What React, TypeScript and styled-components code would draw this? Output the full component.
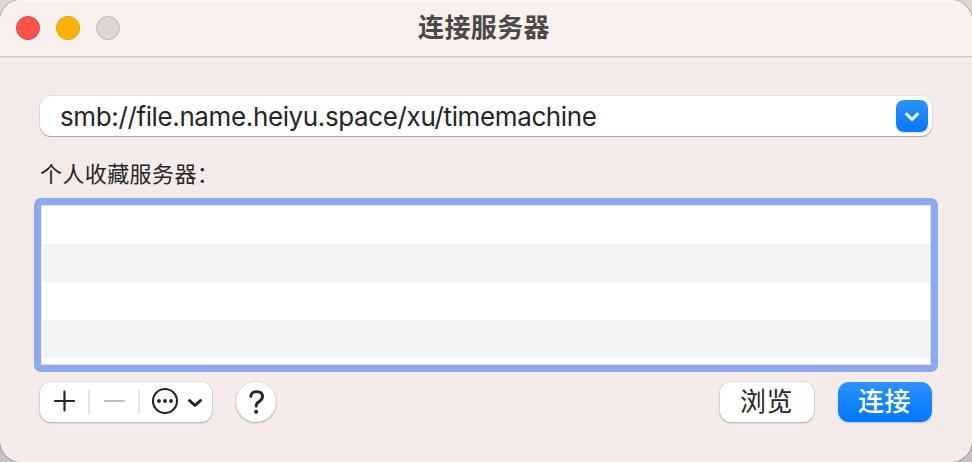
import React from "react";
import styled, { createGlobalStyle } from "styled-components";

const GlobalStyle = createGlobalStyle`
  * { box-sizing: border-box; }
  html, body { margin: 0; padding: 0; overflow: hidden; }
  body {
    background: linear-gradient(#dcd8d5, #c4c2c2);
    font-family: Inter, "Noto Sans CJK SC", sans-serif;
    color: #262626;
  }
  button { font: inherit; color: inherit; border: 0; padding: 0; background: none; }
`;

const Window = styled.main`
  display: flex;
  flex-direction: column;
  width: 972px;
  height: 462px;
  border-radius: 21px;
  background: #f4ebea;
  box-shadow: 0 0 0 1px rgba(0, 0, 0, 0.2);
  overflow: hidden;
`;

const TitleBar = styled.header`
  display: grid;
  grid-template-columns: 1fr auto 1fr;
  align-items: center;
  height: 57px;
  padding: 0 16px 1px;
  background: #faf0ee;
  border-bottom: 1px solid #d0c6c4;
  box-shadow: inset 0 1px #fffaf8, 0 1px #eae0df;
`;

const TrafficLights = styled.div`
  display: flex;
  gap: 16px;
`;

const Light = styled.span<{ $fill: string; $edge: string }>`
  width: 24px;
  height: 24px;
  border-radius: 50%;
  background: ${(p) => p.$fill};
  border: 1px solid ${(p) => p.$edge};
`;

const Title = styled.h1`
  margin: 0;
  font-family: "Noto Sans CJK SC", sans-serif;
  font-size: 26px;
  line-height: 40px;
  font-weight: 700;
  letter-spacing: 0.4px;
  color: #4b4847;
  transform: translate(-2px, -2px);
`;

const Content = styled.section`
  display: flex;
  flex-direction: column;
  padding: 39px 40px 0;
`;

const AddressField = styled.div`
  display: flex;
  align-items: center;
  justify-content: space-between;
  height: 40px;
  padding: 0 4px 0 20px;
  border-radius: 11px;
  background: #fff;
  box-shadow: 0 0 0 1px rgba(0, 0, 0, 0.06), 0 1px 1px rgba(0, 0, 0, 0.27);
`;

const Address = styled.span`
  font-size: 26px;
  line-height: 40px;
  letter-spacing: -0.375px;
  white-space: nowrap;
  padding-top: 2px;
`;

const HistoryButton = styled.button`
  display: flex;
  width: 32px;
  height: 32px;
  border-radius: 8px;
  background: linear-gradient(#2c91ff, #0579ff);
  box-shadow: 0 1px 2px rgba(0, 100, 255, 0.25);
`;

const Label = styled.div`
  height: 32px;
  margin-top: 22px;
  font-family: "Noto Sans CJK SC", sans-serif;
  font-size: 22px;
  line-height: 28px;
  letter-spacing: 0.4px;
`;

const FavoriteList = styled.div`
  height: 174px;
  margin: 8px -6px 0;
  border: 7px solid #8fa9ef;
  border-radius: 7px;
  background: #fff;
`;

const Rows = styled.div`
  height: 160px;
  border: 1px solid #dedede;
  border-left-color: #ececec;
  overflow: hidden;
`;

const Row = styled.div<{ $shaded?: boolean }>`
  height: 38px;
  background: ${(p) => (p.$shaded ? "#f3f5f4" : "#fff")};
`;

const Footer = styled.footer`
  display: flex;
  height: 40px;
  margin-top: 10px;
`;

const raised = "0 0 0 1px rgba(0,0,0,0.05), 0 1px 2px rgba(0,0,0,0.25)";

const ActionGroup = styled.div`
  display: flex;
  align-items: center;
  width: 172px;
  height: 40px;
  border-radius: 11px;
  background: #fff;
  box-shadow: ${raised};
`;

const ActionButton = styled.button<{ $width: number }>`
  display: flex;
  width: ${(p) => p.$width}px;
  height: 40px;
`;

const Divider = styled.span`
  width: 2px;
  height: 24px;
  background: #e4e4e4;
`;

const HelpButton = styled.button`
  display: flex;
  width: 40px;
  height: 40px;
  margin-left: 24px;
  border-radius: 50%;
  background: #fff;
  box-shadow: ${raised};
`;

const Choices = styled.div`
  display: flex;
  gap: 24px;
  margin-left: auto;
`;

const PushButton = styled.button<{ $primary?: boolean }>`
  width: 94px;
  height: 40px;
  padding: 0 1px 4px 0;
  border-radius: 11px;
  font-family: "Noto Sans CJK SC", sans-serif;
  font-size: 26px;
  line-height: 34px;
  letter-spacing: 0.4px;
  font-weight: ${(p) => (p.$primary ? 500 : 400)};
  color: ${(p) => (p.$primary ? "#fff" : "#262626")};
  background: ${(p) => (p.$primary ? "linear-gradient(#2c91ff, #0077ff)" : "#fff")};
  box-shadow: ${(p) => (p.$primary ? "0 1px 2px rgba(0,100,255,0.25)" : raised)};
`;

const Glyph = styled.svg`
  display: block;
  fill: none;
  stroke: #262626;
  stroke-linecap: round;
  stroke-linejoin: round;
`;

export default function App() {
  return (
    <>
      <GlobalStyle />
      <Window>
        <TitleBar>
          <TrafficLights>
            <Light $fill="#ff534c" $edge="#df4540" />
            <Light $fill="#ffb500" $edge="#da9b14" />
            <Light $fill="#dfd6d4" $edge="#bdb4b2" />
          </TrafficLights>
          <Title>连接服务器</Title>
        </TitleBar>
        <Content>
          <AddressField>
            <Address>smb://file.name.heiyu.space/xu/timemachine</Address>
            <HistoryButton aria-label="历史记录">
              <Glyph width="32" height="32">
                <path d="M10.5 14 16 19.5 21.5 14" stroke="#fff" strokeWidth="3" />
              </Glyph>
            </HistoryButton>
          </AddressField>
          <Label>个人收藏服务器：</Label>
          <FavoriteList>
            <Rows>
              <Row />
              <Row $shaded />
              <Row />
              <Row $shaded />
            </Rows>
          </FavoriteList>
          <Footer>
            <ActionGroup>
              <ActionButton $width={48} aria-label="添加">
                <Glyph width="48" height="40">
                  <path d="M15 19H34M24.5 9.5V28.5" strokeWidth="2.2" />
                </Glyph>
              </ActionButton>
              <Divider />
              <ActionButton $width={48} aria-label="移除">
                <Glyph width="48" height="40">
                  <path d="M15 19H34" strokeWidth="2" stroke="#bdbdbd" />
                </Glyph>
              </ActionButton>
              <Divider />
              <ActionButton $width={72} aria-label="更多">
                <Glyph width="72" height="40">
                  <circle cx="25" cy="19" r="12" strokeWidth="2.1" />
                  <g fill="#262626" stroke="none">
                    <circle cx="19" cy="19" r="1.9" />
                    <circle cx="25" cy="19" r="1.9" />
                    <circle cx="31" cy="19" r="1.9" />
                  </g>
                  <path d="M49.5 18.5 55 23.5 60.5 18.5" strokeWidth="3" />
                </Glyph>
              </ActionButton>
            </ActionGroup>
            <HelpButton aria-label="帮助">
              <Glyph width="40" height="40">
                <path
                  d="M14.8 14.4C15.2 11.3 17.3 9.6 20.7 9.6C24.3 9.6 26.5 11.6 26.5 14.6C26.5 17 25.3 18.2 23.3 19.5C21.2 20.8 20.2 21.8 20.2 23.7V24.3"
                  strokeWidth="2.9"
                />
                <circle cx="20.2" cy="29.8" r="2" fill="#262626" stroke="none" />
              </Glyph>
            </HelpButton>
            <Choices>
              <PushButton>浏览</PushButton>
              <PushButton $primary>连接</PushButton>
            </Choices>
          </Footer>
        </Content>
      </Window>
    </>
  );
}
